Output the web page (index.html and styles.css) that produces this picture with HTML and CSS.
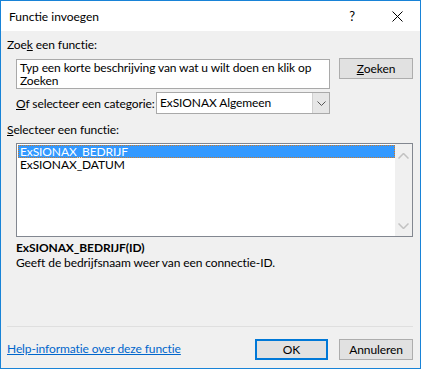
FILE: index.html
```html
<!DOCTYPE html>
<html>
<head>
<meta charset="utf-8">
<link rel="stylesheet" href="styles.css">
</head>
<body>
<div class="window">
  <div class="titlebar">
    <span class="title">Functie invoegen</span>
    <span class="help">?</span>
    <svg class="close" width="11" height="11" viewBox="0 0 11 11"><path d="M0.5 0.5 L10.5 10.5 M10.5 0.5 L0.5 10.5" stroke="#000" stroke-width="1" fill="none"/></svg>
  </div>
  <div class="content">
    <div class="label">Zoe<u>k</u> een functie:</div>
    <div class="search-row">
      <div class="textarea">Typ een korte beschrijving van wat u wilt doen en klik op Zoeken</div>
      <div class="btn search-btn"><u>Z</u>oeken</div>
    </div>
    <div class="cat-row">
      <span class="cat-label"><u>O</u>f selecteer een categorie:</span>
      <div class="select">
        <span class="select-text">ExSIONAX Algemeen</span>
        <span class="select-arrow"><svg width="9" height="5" viewBox="0 0 9 5"><path d="M0.5 0.5 L4.5 4.5 L8.5 0.5" stroke="#555" fill="none"/></svg></span>
      </div>
    </div>
    <div class="label label2"><u>S</u>electeer een functie:</div>
    <div class="listbox">
      <div class="items">
        <div class="item selected">ExSIONAX_BEDRIJF</div>
        <div class="item">ExSIONAX_DATUM</div>
      </div>
      <div class="scrollbar">
        <svg width="11" height="6" viewBox="0 0 11 6"><path d="M0.5 5.5 L5.5 0.5 L10.5 5.5" stroke="#c2c2c2" stroke-width="1.5" fill="none"/></svg>
        <svg width="11" height="6" viewBox="0 0 11 6"><path d="M0.5 0.5 L5.5 5.5 L10.5 0.5" stroke="#c2c2c2" stroke-width="1.5" fill="none"/></svg>
      </div>
    </div>
    <div class="fn-sig">ExSIONAX_BEDRIJF(ID)</div>
    <div class="fn-desc">Geeft de bedrijfsnaam weer van een connectie-ID.</div>
    <div class="footer">
      <a class="link" href="#">Help-informatie over deze functie</a>
      <div class="btn ok">OK</div>
      <div class="btn cancel">Annuleren</div>
    </div>
  </div>
</div>
</body>
</html>
```
FILE: styles.css
```css
* { box-sizing: border-box; }
html, body { margin: 0; padding: 0; }
body {
  font-family: "Lato", "Noto Sans", sans-serif;
  font-size: 12px;
  letter-spacing: -0.1px;
  color: #000;
  background: #fff;
}
.window {
  width: 421px;
  height: 369px;
  border: 1px solid #1883d7;
  background: #f0f0f0;
  display: flex;
  flex-direction: column;
}
.titlebar {
  height: 30px;
  background: #fff;
  display: flex;
  align-items: center;
  padding-left: 8px;
  flex-shrink: 0;
}
.title { font-size: 12px; letter-spacing: 0; flex: 1; }
.help { font-size: 13px; margin-right: 37px; }
.close { margin-right: 17px; }
.content {
  flex: 1;
  display: flex;
  flex-direction: column;
  padding: 7px 7px 8px 6px;
}
.label { line-height: 14px; height: 14px; }
.search-row {
  display: flex;
  margin-top: 7px;
  padding-left: 9px;
  align-items: flex-start;
}
.textarea {
  width: 314px;
  height: 30px;
  background: #fff;
  border: 1px solid #a9a9a9;
  padding: 1px 3px;
  line-height: 13px;
}
.btn {
  height: 21px;
  width: 74px;
  background: #e1e1e1;
  border: 1px solid #adadad;
  display: flex;
  align-items: center;
  justify-content: center;
  flex-shrink: 0;
}
.search-btn { margin-left: 9px; margin-top: -1px; }
.cat-row {
  display: flex;
  align-items: center;
  margin-top: 3px;
  padding-left: 9px;
  height: 22px;
}
.cat-label { width: 140px; flex-shrink: 0; white-space: nowrap; }
.select {
  width: 174px;
  height: 22px;
  border: 1px solid #a9a9a9;
  background: #fff;
  display: flex;
  align-items: stretch;
  flex-shrink: 0;
}
.select-text { flex: 1; padding-left: 3px; line-height: 20px; }
.select-arrow {
  width: 17px;
  background: #e6e6e6;
  border-left: 1px solid #d0d0d0;
  display: flex;
  align-items: center;
  justify-content: center;
}
.label2 { margin-top: 9px; }
.listbox {
  margin-top: 6px;
  margin-left: 9px;
  width: 397px;
  height: 94px;
  border: 1px solid #828790;
  background: #fff;
  display: flex;
}
.items { flex: 1; padding: 1px 0 0 1px; }
.item { height: 13px; line-height: 13px; padding-left: 2px; }
.item.selected {
  background: #3399ff;
  color: #fff;
  outline: 1px dotted #cc7a29;
  outline-offset: -1px;
}
.scrollbar {
  width: 17px;
  background: #f0f0f0;
  display: flex;
  flex-direction: column;
  justify-content: space-between;
  align-items: center;
  padding: 9px 0 7px;
}
.fn-sig { margin-top: 4px; margin-left: 9px; font-weight: bold; line-height: 14px; }
.fn-desc { margin-top: 1px; margin-left: 9px; line-height: 14px; }
.footer {
  margin-top: auto;
  border-top: 1px solid #dfdfdf;
  padding-top: 12px;
  display: flex;
  align-items: center;
}
.link { color: #0066cc; text-decoration: underline; flex: 1; margin-top: -2px; }
.ok { width: 73px; border: 2px solid #0078d7; }
.cancel { margin-left: 11px; }
```
